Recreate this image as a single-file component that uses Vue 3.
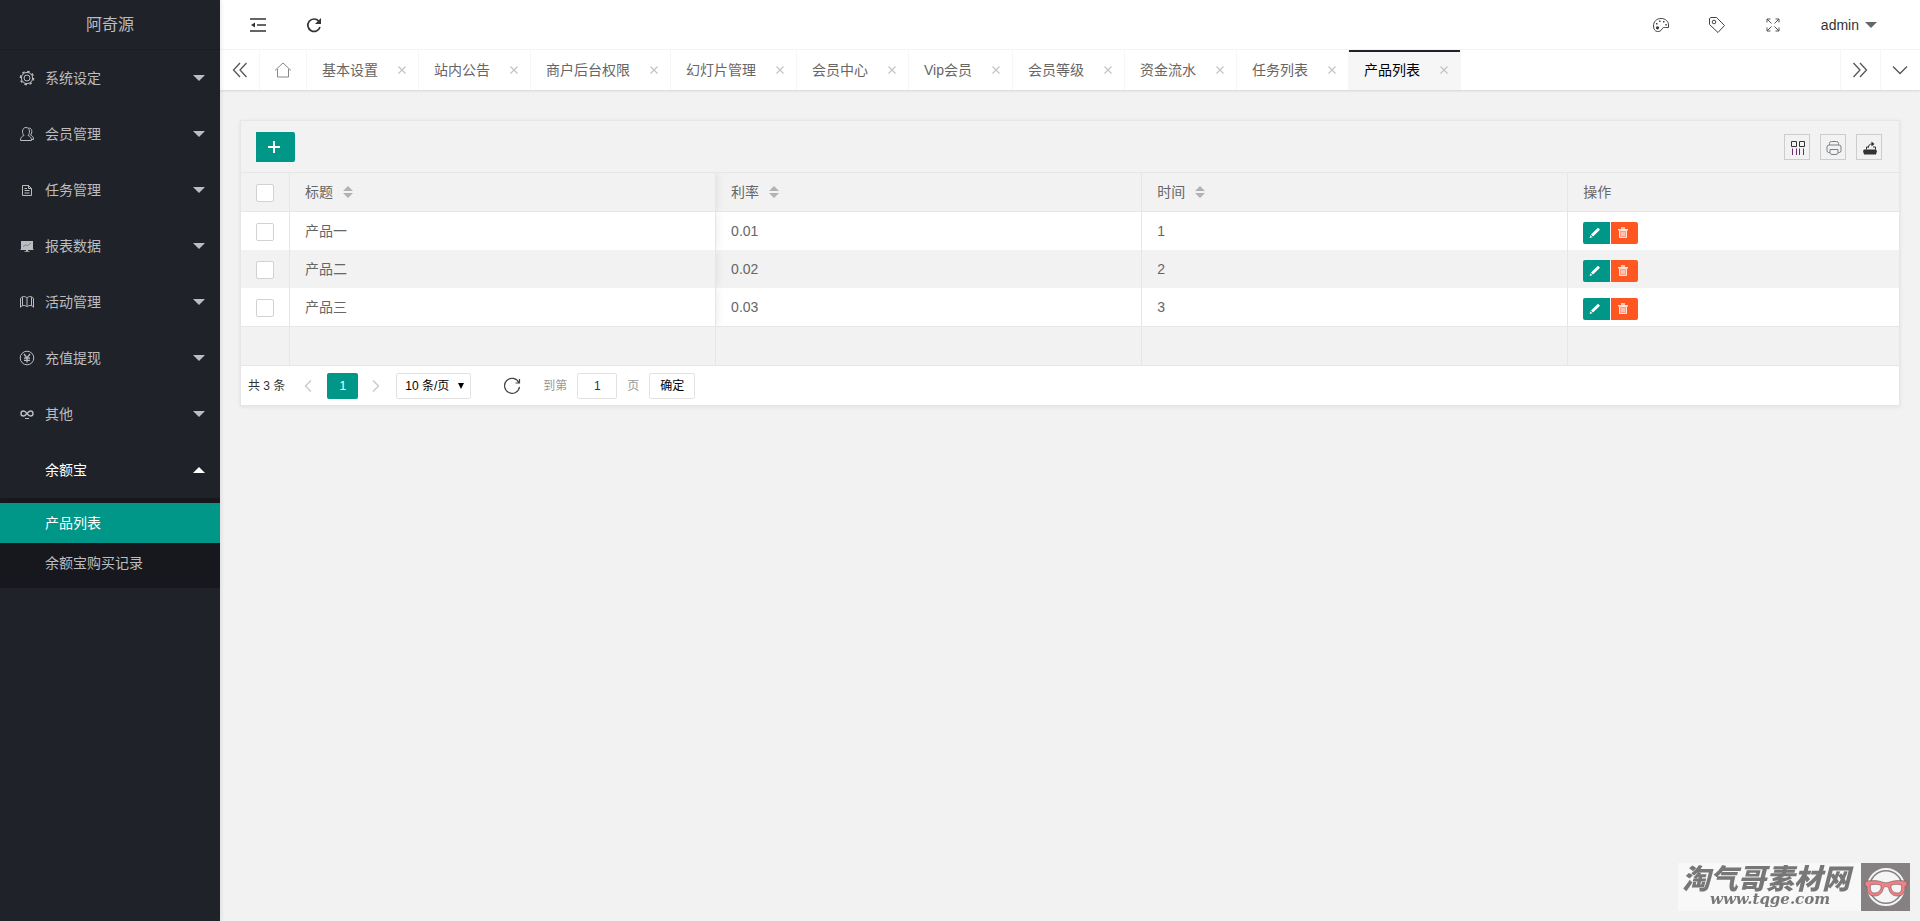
<script setup>
import { ref } from 'vue'

const menu = [
  { label: '系统设定', icon: 'gear' },
  { label: '会员管理', icon: 'user' },
  { label: '任务管理', icon: 'doc' },
  { label: '报表数据', icon: 'board' },
  { label: '活动管理', icon: 'book' },
  { label: '充值提现', icon: 'yen' },
  { label: '其他', icon: 'link' },
  {
    label: '余额宝',
    icon: '',
    open: true,
    children: [
      { label: '产品列表', active: true },
      { label: '余额宝购买记录', active: false }
    ]
  }
]

const tabs = [
  '基本设置', '站内公告', '商户后台权限', '幻灯片管理', '会员中心',
  'Vip会员', '会员等级', '资金流水', '任务列表', '产品列表'
]
const activeTab = ref('产品列表')

const columns = ['标题', '利率', '时间']
const rows = [
  { title: '产品一', rate: '0.01', time: '1' },
  { title: '产品二', rate: '0.02', time: '2' },
  { title: '产品三', rate: '0.03', time: '3' }
]
const page = ref('1')
</script>

<template>
  <div class="layout">
    <aside class="side">
      <div class="brand">阿奇源</div>
      <nav>
        <ul class="menu">
          <li v-for="item in menu" :key="item.label">
            <button type="button" class="menu-item" :class="{ open: item.open }">
              <span class="menu-icon">
                <svg v-if="item.icon === 'gear'" width="16" height="16" viewBox="0 0 16 16" class="line">
                  <circle cx="8" cy="8" r="3" />
                  <circle cx="8" cy="8" r="5.6" />
                  <circle cx="8" cy="8" r="6.6" stroke-width="1.4" stroke-dasharray="2.6 2.58" />
                </svg>
                <svg v-else-if="item.icon === 'user'" width="16" height="16" viewBox="0 0 16 16" class="line">
                  <path d="M5 9.500C3 8 2.500 1.500 7 1.500S11 8 9 9.500c2.200.8 3.500 2 3.500 5h-11c0-3 1.300-4.200 3.500-5z" />
                  <path d="M9.500 2c4-.3 4 5 2 7 2 .8 3 2.200 3 4.500h-2" />
                </svg>
                <svg v-else-if="item.icon === 'doc'" width="16" height="16" viewBox="0 0 16 16" class="line">
                  <path d="M3.500 3.500h6l3 3v7h-9zM9.500 3.500v3h3M5.500 6.500h2.500M5.500 8.500h5M5.500 11h5" />
                </svg>
                <svg v-else-if="item.icon === 'board'" width="16" height="16" viewBox="0 0 16 16">
                  <path fill="currentColor" d="M2 3h12v8H2zM1.500 11h13v1h-13zM7 12h2v1.500H7zM5.500 13h5v.8h-5z" />
                  <path fill="none" stroke="#777980" stroke-width=".8" d="M4 8.500l2.500-1.500 2 .6L12 5" />
                </svg>
                <svg v-else-if="item.icon === 'book'" width="16" height="16" viewBox="0 0 16 16" class="line">
                  <path d="M1.500 13.500V5c0-2.600 5-3.400 6.500-1 1.500-2.400 6.500-1.600 6.500 1v8.500M3.500 11.500V3.200M8 4v8.500M12.500 11.500V3.200M1.500 13c1.500-2 5.500-2 6.500 0 1-2 5-2 6.500 0" />
                </svg>
                <svg v-else-if="item.icon === 'yen'" width="16" height="16" viewBox="0 0 16 16" class="line">
                  <circle cx="8" cy="8" r="6.800" />
                  <path stroke-width="1.300" d="M5 4l3 4 3-4M8 8v4.500M5 8.200h6M5 10.300h6" />
                </svg>
                <svg v-else-if="item.icon === 'link'" width="16" height="16" viewBox="0 0 16 16" class="line">
                  <path stroke-width="1.400" d="M8 7.500C6.500 5.500 5.500 5 4.500 5a2.400 2.400 0 0 0 0 5C6 10 7 8.600 8 7.500S10 5 11.500 5a2.400 2.400 0 0 1 0 5C10.500 10 9.500 9.500 8 7.500z" />
                  <path d="M6 12.500h4" />
                </svg>
              </span>
              <span class="menu-text">{{ item.label }}</span>
              <span class="caret" :class="{ up: item.open }"></span>
            </button>
            <ul v-if="item.children" class="submenu">
              <li v-for="child in item.children" :key="child.label">
                <a href="#" :class="{ active: child.active }">{{ child.label }}</a>
              </li>
            </ul>
          </li>
        </ul>
      </nav>
    </aside>

    <div class="main">
      <header class="topbar">
        <div class="group">
          <button type="button" class="top-btn" aria-label="侧边伸缩">
            <svg width="16" height="16" viewBox="0 0 16 16">
              <path fill="none" stroke="#333" stroke-width="1.500" d="M0 2h16M7 8h9M0 14h16" />
              <path fill="#333" d="M1 8l4-2.500v5z" />
            </svg>
          </button>
          <button type="button" class="top-btn" aria-label="刷新">
            <svg width="16" height="16" viewBox="0 0 16 16">
              <path fill="none" stroke="#333" stroke-width="1.700" d="M12.800 4.200A6.200 6.200 0 1 0 14 10" />
              <path fill="#333" d="M15 1v6H9z" />
            </svg>
          </button>
        </div>
        <div class="group right">
          <button type="button" class="top-btn" aria-label="主题">
            <svg width="18" height="16" viewBox="0 0 18 16">
              <path fill="none" stroke="#444" d="M9 1.500c4.500 0 7.500 3 7.500 6.500v2.500h-3c-2-.4-3 .6-3.500 1.500-1 2-2.500 2.500-4.500 2.500-2.500 0-4-2.500-4-5.500C1.500 4.500 4.500 1.500 9 1.500z" />
              <path fill="#444" d="M4 6h1.500v1.500H4zM7 3.500h1.500V5H7zM11 4h1.500v1.500H11zM13.300 7h1.500v1.500h-1.500z" />
              <circle cx="5.500" cy="10.800" r="1.600" fill="#333" />
            </svg>
          </button>
          <button type="button" class="top-btn" aria-label="便签">
            <svg width="18" height="18" viewBox="0 0 18 18" fill="none" stroke="#444">
              <path d="M1.500 2.500L3 1.500h5.500l8 8-6.500 7-8.500-8z" />
              <circle cx="6" cy="6" r="1.800" />
            </svg>
          </button>
          <button type="button" class="top-btn" aria-label="全屏">
            <svg width="16" height="16" viewBox="0 0 16 16" fill="none" stroke="#555">
              <path d="M2 5.500V2h3.500M2 2l4.500 4.500M10.500 2H14v3.500M14 2L9.500 6.500M2 10.500V14h3.500M2 14l4.500-4.500M14 10.500V14h-3.500M14 14L9.500 9.500" />
            </svg>
          </button>
          <button type="button" class="user">admin<span class="caret dark"></span></button>
        </div>
      </header>

      <div class="tabbar">
        <button type="button" class="tab-ctl" aria-label="向左">
          <svg width="16" height="16" viewBox="0 0 16 16" fill="none" stroke="#555" stroke-width="1.300"><path d="M8 1L1.500 8 8 15M14.500 1L8 8l6.500 7" /></svg>
        </button>
        <ul class="tabs">
          <li class="home">
            <a href="#" aria-label="主页">
              <svg width="18" height="16" viewBox="0 0 18 16" fill="none" stroke="#888"><path d="M1 8.500L9 1l8 7.500M3.500 7v8h11V7" /></svg>
            </a>
          </li>
          <li v-for="tab in tabs" :key="tab" :class="{ current: tab === activeTab }">
            <a href="#" @click.prevent="activeTab = tab">{{ tab }}</a>
            <button type="button" class="close" :aria-label="'关闭 ' + tab">
              <svg width="8" height="8" viewBox="0 0 8 8" fill="none" stroke="#c2c2c2" stroke-width="1.100"><path d="M.5.5l7 7M7.500.5l-7 7" /></svg>
            </button>
          </li>
        </ul>
        <button type="button" class="tab-ctl end" aria-label="向右">
          <svg width="16" height="16" viewBox="0 0 16 16" fill="none" stroke="#555" stroke-width="1.300"><path d="M1.500 1L8 8l-6.500 7M8 1l6.500 7L8 15" /></svg>
        </button>
        <button type="button" class="tab-ctl end" aria-label="更多">
          <svg width="16" height="16" viewBox="0 0 16 16" fill="none" stroke="#555" stroke-width="1.300"><path d="M1 4.500l7 7 7-7" /></svg>
        </button>
      </div>

      <main class="content">
        <section class="card">
          <div class="toolbar">
            <button type="button" class="add" aria-label="添加">
              <svg width="12" height="12" viewBox="0 0 12 12"><path stroke="#fff" stroke-width="2" d="M6 0v12M0 6h12" /></svg>
            </button>
            <div class="tools">
              <button type="button" aria-label="筛选列">
                <svg width="14" height="14" viewBox="0 0 14 14" fill="none">
                  <path stroke="#333" d="M.5.5h5v5h-5zM8.500.5h5v5h-5z" />
                  <path stroke="#6b2d6b" d="M1.500 7.500V14M5.500 7.500V14M8.500 7.500V14M12.500 7.500V14" />
                </svg>
              </button>
              <button type="button" aria-label="打印">
                <svg width="16" height="16" viewBox="0 0 16 16" fill="none" stroke="#7a7f85">
                  <path d="M3.500 5V3.500q0-2 2-2h5q2 0 2 2V5M4 12.500H2.500q-1.500 0-1.500-2V7q0-2 2-2h10q2 0 2 2v3.500q0 2-1.500 2H12M4 9.500h8v3q0 2-2 2H6q-2 0-2-2z" />
                </svg>
              </button>
              <button type="button" aria-label="导出">
                <svg width="14" height="14" viewBox="0 0 14 14">
                  <path fill="#333" d="M1 8.500h12L14 10l-1 3.500H1L0 10z" />
                  <path fill="none" stroke="#333" d="M3.500 8.500V6H6M12.500 8.500V6H10M5.500 6.500c0-2.500 1-3.500 3.500-3.500" />
                  <path fill="#333" d="M8.500.5L11.500 3l-3 2.500z" />
                </svg>
              </button>
            </div>
          </div>

          <table class="grid">
            <colgroup>
              <col class="c-check"><col class="c-data"><col class="c-data"><col class="c-data"><col>
            </colgroup>
            <thead>
              <tr>
                <th><input type="checkbox" aria-label="全选"></th>
                <th v-for="(col, i) in columns" :key="col" :class="{ pinned: i === 0 }">
                  <span class="sort-label">{{ col }}
                    <svg width="10" height="12" viewBox="0 0 10 12" fill="#b2b2b2"><path d="M5 0l5 5H0zM0 7h10l-5 5z" /></svg>
                  </span>
                </th>
                <th>操作</th>
              </tr>
            </thead>
            <tbody>
              <tr v-for="row in rows" :key="row.title">
                <td><input type="checkbox" :aria-label="'选择 ' + row.title"></td>
                <td class="pinned">{{ row.title }}</td>
                <td>{{ row.rate }}</td>
                <td>{{ row.time }}</td>
                <td>
                  <div class="ops">
                    <button type="button" class="edit" aria-label="编辑">
                      <svg width="12" height="12" viewBox="0 0 12 12"><path fill="#fff" d="M9 .8l2 2L4 9.500l-2-2zM1.400 8.200l2 2L.6 11z" /></svg>
                    </button>
                    <button type="button" class="del" aria-label="删除">
                      <svg width="12" height="12" viewBox="0 0 12 12" fill="none" stroke="#ffe3da">
                        <path stroke-width="1.400" d="M1 2.700h10M4 1h4" />
                        <path fill="#ff9c80" d="M2.500 3.500h7v7h-7z" />
                        <path d="M5 5v4M7 5v4" />
                      </svg>
                    </button>
                  </div>
                </td>
              </tr>
            </tbody>
            <tfoot>
              <tr><td></td><td></td><td></td><td></td><td></td></tr>
            </tfoot>
          </table>

          <div class="pager">
            <span class="total">共 3 条</span>
            <button type="button" class="step" aria-label="上一页">
              <svg width="8" height="12" viewBox="0 0 8 12" fill="none" stroke="#ccc" stroke-width="1.500"><path d="M7 .5L1.500 6 7 11.500" /></svg>
            </button>
            <button type="button" class="num">1</button>
            <button type="button" class="step" aria-label="下一页">
              <svg width="8" height="12" viewBox="0 0 8 12" fill="none" stroke="#ccc" stroke-width="1.500"><path d="M1 .5L6.500 6 1 11.500" /></svg>
            </button>
            <span class="select">
              <select aria-label="每页条数"><option>10 条/页</option></select>
            </span>
            <button type="button" class="reload" aria-label="刷新表格">
              <svg width="18" height="18" viewBox="0 0 18 18" fill="none" stroke="#444" stroke-width="1.200"><path d="M15.800 5.500A7.500 7.500 0 1 0 16.500 9.800M16.500 2v4h-4" /></svg>
            </button>
            <label class="muted" for="page-no">到第</label>
            <input id="page-no" v-model="page" class="page-no" type="text">
            <span class="muted">页</span>
            <button type="button" class="go">确定</button>
          </div>
        </section>
      </main>
    </div>

    <div class="mark">
      <div class="mark-text">
        <span class="mark-name">淘气哥素材网</span>
        <span class="mark-url">www.tqge.com</span>
      </div>
      <svg class="mark-logo" width="49" height="48" viewBox="0 0 49 48">
        <path fill="#858081" d="M0 0h49v48H0z" />
        <circle cx="25" cy="24" r="18" fill="#858081" stroke="#f5f5f5" stroke-width="2" />
        <circle cx="25" cy="24" r="15.500" fill="#f5f5f5" />
        <path fill="#f08083" stroke="#6d5557" stroke-width=".6" d="M4 18.500c6-1.500 14-1 18 .8q3 1 6 0c4-1.800 12-2.300 18-.8v4l-2 1c0 6-2 9.500-7 9.500-6 0-8.500-3-9.500-8.500q-2.500-2-5 0C21.500 30 19 33 13 33c-5 0-7-3.500-7-9.500l-2-1z" />
        <path fill="#f5f5f5" stroke="#6d5557" stroke-width=".6" d="M9.500 22c3-1 8-1 10.500.5.5 4-2 7.500-6.500 7.500-3.500 0-4.500-3-4-8zM40.500 22c-3-1-8-1-10.500.5-.5 4 2 7.500 6.500 7.500 3.500 0 4.500-3 4-8z" />
      </svg>
    </div>
  </div>
</template>

<style>
body {
  margin: 0;
  background: #f2f2f2;
}
</style>

<style scoped>
.layout {
  display: flex;
  min-height: 100vh;
  font: 14px/24px "Liberation Sans", "Noto Sans CJK SC", sans-serif;
  color: #666;
}
.layout * { box-sizing: border-box; }
ul { margin: 0; padding: 0; list-style: none; }
button {
  margin: 0;
  padding: 0;
  border: 0;
  background: none;
  font: inherit;
  color: inherit;
  cursor: pointer;
}
a { color: inherit; text-decoration: none; }
svg { display: block; flex: none; }
.line { fill: none; stroke: currentColor; stroke-width: 1; }

/* sidebar */
.side {
  position: relative;
  z-index: 2;
  flex: none;
  width: 220px;
  background: #20222a;
  color: #bcbdbf;
  box-shadow: 1px 0 4px rgba(0, 0, 0, .1);
}
.brand {
  height: 50px;
  line-height: 49px;
  text-align: center;
  font-size: 16px;
  border-bottom: 1px solid #1b1d23;
}
.menu-item {
  display: flex;
  align-items: center;
  width: 100%;
  height: 56px;
  padding: 0 15px 0 19px;
  text-align: left;
}
.menu-icon { width: 26px; }
.menu-text { flex: 1; }
.open { color: #fff; }
.caret {
  border: 6px solid transparent;
  border-top-color: currentColor;
  border-bottom-width: 0;
}
.caret.up {
  border-top-width: 0;
  border-bottom: 6px solid currentColor;
}
.submenu {
  padding: 5px 0;
  border-radius: 2px;
  background: #16181d;
}
.submenu a {
  display: block;
  height: 40px;
  padding-left: 45px;
  line-height: 40px;
}
.submenu .active { background: #009688; color: #fff; }

/* header */
.main { flex: 1; min-width: 0; }
.topbar {
  display: flex;
  justify-content: space-between;
  height: 50px;
  padding: 0 33px 0 10px;
  background: #fff;
  border-bottom: 1px solid #f6f6f6;
}
.group { display: flex; align-items: center; }
.top-btn {
  display: flex;
  align-items: center;
  justify-content: center;
  width: 56px;
  height: 50px;
}
.user {
  display: flex;
  align-items: center;
  gap: 6px;
  padding: 0 10px 0 20px;
  color: #333;
}
.caret.dark { color: #666; }

/* tabs */
.tabbar {
  position: relative;
  z-index: 1;
  display: flex;
  height: 40px;
  background: #fff;
  box-shadow: 0 1px 2px rgba(0, 0, 0, .12);
}
.tab-ctl {
  display: flex;
  align-items: center;
  justify-content: center;
  flex: none;
  width: 40px;
  border-right: 1px solid #f6f6f6;
}
.tab-ctl.end { padding-right: 1px; border-right: 0; border-left: 1px solid #f6f6f6; }
.tabs { display: flex; flex: 1; min-width: 0; overflow: hidden; }
.tabs li {
  display: flex;
  align-items: center;
  gap: 20px;
  padding: 0 12px 0 15px;
  border-right: 1px solid #f6f6f6;
  white-space: nowrap;
  line-height: 38px;
}
.tabs .home { padding: 0 14px; }
.tabs .current {
  background: #f6f6f6;
  box-shadow: inset 0 2px #20222a;
  color: #000;
}
.close { width: 8px; }

/* card */
.content { padding: 30px 20px; }
.card {
  border: 1px solid #e6e6e6;
  background: #fff;
  box-shadow: 0 1px 4px rgba(0, 0, 0, .08);
}
.toolbar {
  display: flex;
  align-items: center;
  justify-content: space-between;
  height: 52px;
  padding: 0 17px 0 15px;
  background: #f2f2f2;
  border-bottom: 1px solid #e6e6e6;
}
.add {
  display: flex;
  align-items: center;
  justify-content: center;
  width: 39px;
  height: 30px;
  padding-right: 3px;
  border-radius: 0 2px 2px 0;
  background: #009688;
}
.tools { display: flex; gap: 10px; }
.tools button {
  display: flex;
  align-items: center;
  justify-content: center;
  width: 26px;
  height: 26px;
  padding: 2px 0 0 2px;
  border: 1px solid #ccc;
}
.grid {
  width: 100%;
  table-layout: fixed;
  border-collapse: separate;
  border-spacing: 0;
}
.c-check { width: 49px; }
.c-data { width: 25.7%; }
.grid th,
.grid td {
  height: 38px;
  padding: 0 15px;
  border-right: 1px solid #e6e6e6;
  text-align: left;
  vertical-align: middle;
  font-weight: 400;
}
.grid th:last-child,
.grid td:last-child { border-right: 0; }
.grid th { height: 39px; background: #f2f2f2; border-bottom: 1px solid #e6e6e6; }
.grid tbody tr:nth-child(even) { background: #f2f2f2; }
.grid .pinned {
  box-shadow: 1px 0 8px rgba(0, 0, 0, .08);
  clip-path: inset(0 -8px 0 0);
}
.grid tfoot td {
  height: 40px;
  background: #f2f2f2;
  border-top: 1px solid #e6e6e6;
  border-bottom: 1px solid #e6e6e6;
}
.grid input {
  display: block;
  appearance: none;
  width: 18px;
  height: 18px;
  margin: 2px 0 0;
  border: 1px solid #d2d2d2;
  border-radius: 2px;
  background: #fff;
}
.sort-label { display: flex; align-items: center; gap: 10px; }
.ops { display: flex; gap: 1px; padding-top: 4px; }
.ops button {
  display: flex;
  align-items: center;
  justify-content: center;
  width: 27px;
  height: 22px;
  padding-right: 3px;
}
.edit { border-radius: 2px 0 0 2px; background: #009688; }
.del { border-radius: 0 2px 2px 0; background: #ff5722; }

/* pager */
.pager {
  display: flex;
  align-items: center;
  height: 39px;
  padding-left: 7px;
  font-size: 12px;
}
.total { color: #333; }
.step {
  display: flex;
  align-items: center;
  justify-content: center;
  width: 36px;
  height: 26px;
}
.total + .step { margin-left: 5px; }
.num {
  width: 31px;
  height: 26px;
  margin-left: 1px;
  border-radius: 2px;
  background: #009688;
  color: #fff;
}
.select { position: relative; margin: 0 32px 0 2px; }
.select::after {
  content: "";
  position: absolute;
  top: 10px;
  right: 7px;
  border: 3px solid transparent;
  border-top: 6px solid #000;
  border-bottom: 0;
  pointer-events: none;
}
.select select {
  display: block;
  appearance: none;
  width: 75px;
  height: 26px;
  margin: 0;
  padding: 0 8px;
  border: 1px solid #e2e2e2;
  border-radius: 2px;
  background: #fff;
  color: #000;
  font: inherit;
}
.reload { margin-right: 22px; }
.muted { color: #999; }
.page-no {
  width: 40px;
  height: 26px;
  margin: 0 10px;
  padding: 0;
  border: 1px solid #e2e2e2;
  border-radius: 2px;
  background: #fff;
  color: #333;
  font: inherit;
  text-align: center;
}
.go {
  width: 46px;
  height: 26px;
  margin-left: 10px;
  border: 1px solid #e2e2e2;
  border-radius: 2px;
  color: #000;
}

/* corner mark */
.mark {
  position: fixed;
  right: 10px;
  bottom: 10px;
  z-index: 3;
  display: flex;
  height: 48px;
  background: #f8f8f8;
  color: #777;
}
.mark-text {
  display: flex;
  flex-direction: column;
  align-items: flex-start;
  width: 183px;
  padding-left: 4px;
}
.mark-name {
  font: italic 900 28px/28px "Noto Sans CJK SC", sans-serif;
}
.mark-url {
  padding-left: 28px;
  font: italic 700 15px/16px "DejaVu Serif", serif;
}
</style>
